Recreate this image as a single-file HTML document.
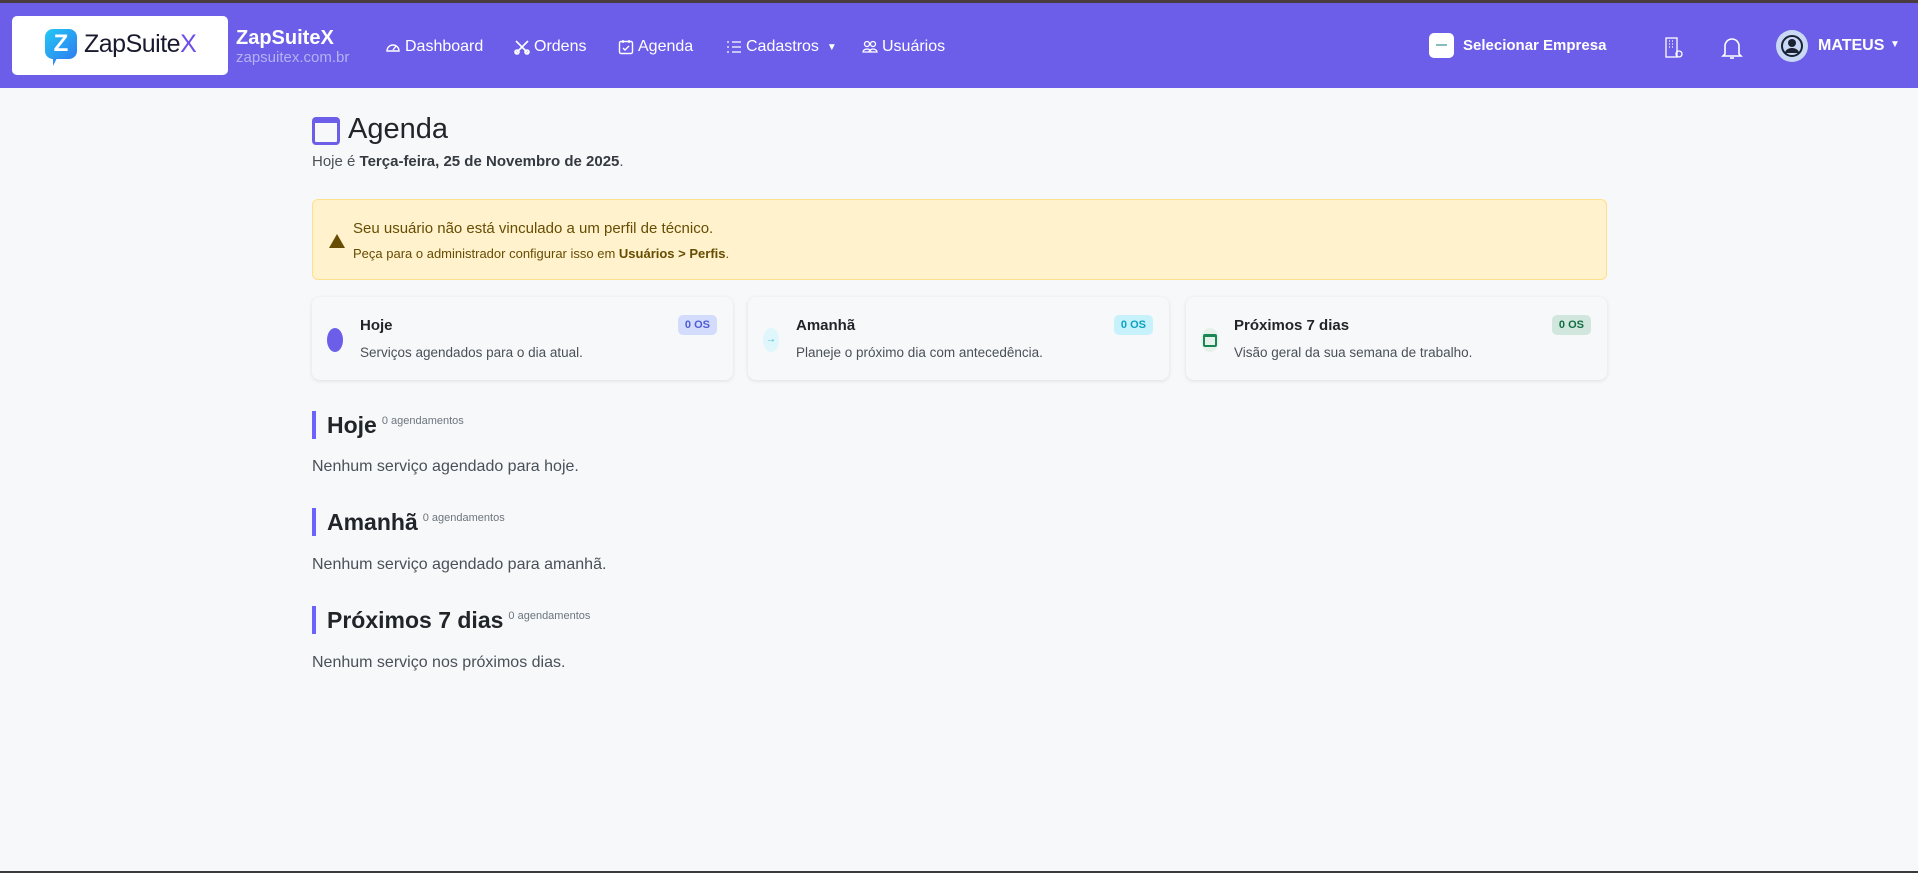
<!DOCTYPE html>
<html><head><meta charset="utf-8"><style>
*{box-sizing:border-box;margin:0;padding:0}
body{width:1918px;height:873px;background:#f7f8fa;font-family:"Liberation Sans",sans-serif;color:#212529;position:relative;overflow:hidden}
.top{position:absolute;left:0;top:0;width:1918px;height:3px;background:#4a3b3f}
.bot{position:absolute;left:0;bottom:0;width:1918px;height:2px;background:#3a3a3a}
header{position:absolute;top:3px;left:0;width:1918px;height:85px;background:#6c5ee9}
.logo{position:absolute;left:12px;top:13px;width:216px;height:59px;background:#fff;border-radius:5px}
.logo .z{position:absolute;left:33px;top:13px;width:32px;height:30px;border-radius:8px;background:linear-gradient(135deg,#22c8f5,#2f7df0);color:#fff;font-weight:bold;font-size:24px;text-align:center;line-height:30px}
.logo .z:after{content:"";position:absolute;left:8px;bottom:-7px;border-left:4px solid #2f8ef0;border-right:4px solid transparent;border-top:0;border-bottom:8px solid transparent}
.logo .t{position:absolute;left:72px;top:14px;font-size:25px;color:#1a1a2e;letter-spacing:-0.5px}
.brand{position:absolute;left:236px;top:24px;color:#fff;font-weight:bold;font-size:20px}
.sub{position:absolute;left:236px;top:46px;color:#b7b0f2;font-size:15px}
.nav{position:absolute;top:35px;color:#fff;font-size:16px;display:flex;align-items:center;gap:4px}
.nav svg{width:16px;height:16px}
.rt{position:absolute;color:#fff;font-weight:bold;font-size:16px}
h1{position:absolute;top:113px;left:312px;font-size:29px;font-weight:normal;color:#212529;padding-left:36px}
.cal{position:absolute;left:312px;top:117px;width:28px;height:28px;border:3px solid #6c5ee9;border-top-width:6px;border-radius:4px}
.date{position:absolute;left:312px;top:153px;font-size:15px;color:#495057}
.alert{position:absolute;left:312px;top:199px;width:1295px;height:81px;background:#fff2cc;border:1px solid #ffe08a;border-radius:6px;color:#664d03}
.alert .a1{position:absolute;left:40px;top:20px;font-size:15px}
.alert .a2{position:absolute;left:40px;top:46px;font-size:13px}
.alert .w{position:absolute;left:16px;top:34px;width:0;height:0;border-left:8px solid transparent;border-right:8px solid transparent;border-bottom:14px solid #664d03}
.card{position:absolute;top:297px;width:421px;height:83px;background:#f7f8fa;border-radius:8px;box-shadow:0 1px 4px rgba(0,0,0,.1)}
.card .h{position:absolute;left:48px;top:20px;font-size:15px;font-weight:bold;color:#212529}
.card .d{position:absolute;left:48px;top:48px;font-size:13.5px;color:#495057}
.card .b{position:absolute;right:16px;top:18px;font-size:11px;font-weight:bold;padding:4px 7px;border-radius:5px}
.card .ic{position:absolute;left:15px;top:31px;width:16px;height:24px;border-radius:50%}
.sec{position:absolute;left:312px;border-left:4px solid #6c63ff;padding-left:11px;height:28px;font-size:23px;font-weight:bold;line-height:28px;color:#212529}
.sec small{font-size:11px;font-weight:normal;color:#6c757d;vertical-align:top;line-height:20px;margin-left:5px}
.none{position:absolute;left:312px;font-size:16px;color:#495057}
</style></head><body>
<div class="top"></div>
<header>
<div class="logo"><div class="z">Z</div><div class="t">ZapSuite<span style="color:#6c4ee9">X</span></div></div>
<div class="brand">ZapSuiteX</div>
<div class="sub">zapsuitex.com.br</div>
<div class="nav" style="left:385px"><svg viewBox="0 0 16 16" fill="none" stroke="#fff" stroke-width="1.4"><path d="M2 12a6 6 0 1 1 12 0z"/><path d="M8 11l3-4"/></svg>Dashboard</div>
<div class="nav" style="left:514px"><svg viewBox="0 0 16 16" fill="none" stroke="#fff" stroke-width="1.6"><path d="M2 2l12 12M14 2L2 14"/><circle cx="3" cy="13" r="2"/><circle cx="13" cy="13" r="2"/></svg>Ordens</div>
<div class="nav" style="left:618px"><svg viewBox="0 0 16 16" fill="none" stroke="#fff" stroke-width="1.4"><rect x="1.5" y="2.5" width="13" height="12" rx="1.5"/><path d="M5 1v3M11 1v3M5 9l2 2 4-4"/></svg>Agenda</div>
<div class="nav" style="left:726px"><svg viewBox="0 0 16 16" fill="none" stroke="#fff" stroke-width="1.3"><path d="M6 3h9M6 8h9M6 13h9M1 3h2M1 8h2M1 13h2"/></svg>Cadastros <span style="font-size:10px;margin-left:4px">▼</span></div>
<div class="nav" style="left:862px"><svg viewBox="0 0 16 16" fill="none" stroke="#fff" stroke-width="1.3"><circle cx="5" cy="5" r="2.5"/><circle cx="11" cy="5" r="2.5"/><path d="M1 13a4 3 0 0 1 8 0zM7 13a4 3 0 0 1 8 0z"/></svg>Usuários</div>
<div style="position:absolute;left:1429px;top:30px;width:25px;height:25px;background:#fff;border-radius:5px"><div style="position:absolute;left:7px;top:11px;width:11px;height:2px;background:#8bb"></div></div>
<div class="rt" style="left:1463px;top:34px;font-size:15px">Selecionar Empresa</div>
<svg style="position:absolute;left:1664px;top:34px" width="20" height="22" viewBox="0 0 20 22" fill="none" stroke="#fff" stroke-width="1.3"><rect x="2" y="1" width="11" height="19"/><path d="M5 4h1M8 4h1M5 7h1M8 7h1M5 10h1M8 10h1"/><circle cx="15" cy="17" r="3"/></svg>
<svg style="position:absolute;left:1721px;top:32px" width="22" height="26" viewBox="0 0 22 26" fill="none" stroke="#fff" stroke-width="1.6"><path d="M4 19V11a7 7 0 0 1 14 0v8l2 2H2z"/><path d="M9 23h4"/></svg>
<div style="position:absolute;left:1776px;top:27px;width:32px;height:32px;border-radius:50%;background:#c9d8f5"><svg width="32" height="32" viewBox="0 0 32 32"><circle cx="16" cy="16" r="10" fill="none" stroke="#1a2233" stroke-width="2"/><circle cx="16" cy="13" r="4" fill="#1a2233"/><path d="M9 23a7 5 0 0 1 14 0" fill="#1a2233"/></svg></div>
<div class="rt" style="left:1818px;top:34px">MATEUS</div>
<div class="rt" style="left:1890px;top:36px;font-size:10px">▼</div>
</header>
<div class="cal"></div>
<h1>Agenda</h1>
<div class="date">Hoje é <b style="color:#343a40">Terça-feira, 25 de Novembro de 2025</b>.</div>
<div class="alert"><div class="w"></div><div class="a1">Seu usuário não está vinculado a um perfil de técnico.</div><div class="a2">Peça para o administrador configurar isso em <b>Usuários &gt; Perfis</b>.</div></div>
<div class="card" style="left:312px"><div class="ic" style="background:#6c5ee9"></div><div class="h">Hoje</div><div class="d">Serviços agendados para o dia atual.</div><div class="b" style="background:#d4dcfd;color:#4f5bd5">0 OS</div></div>
<div class="card" style="left:748px"><div class="ic" style="background:#dff6fb;color:#20b8d8;font-size:10px;text-align:center;line-height:24px">→</div><div class="h">Amanhã</div><div class="d">Planeje o próximo dia com antecedência.</div><div class="b" style="background:#c8f2fb;color:#0aa2c0">0 OS</div></div>
<div class="card" style="left:1186px"><div class="ic" style="background:#e5f1ea;width:18px"><div style="margin:6px 2px;width:14px;height:13px;border:2px solid #198754;border-top-width:3px;border-radius:2px"></div></div><div class="h">Próximos 7 dias</div><div class="d">Visão geral da sua semana de trabalho.</div><div class="b" style="background:#d1e7dd;color:#146c43">0 OS</div></div>
<div class="sec" style="top:411px">Hoje<small>0 agendamentos</small></div>
<div class="none" style="top:458px">Nenhum serviço agendado para hoje.</div>
<div class="sec" style="top:508px">Amanhã<small>0 agendamentos</small></div>
<div class="none" style="top:556px">Nenhum serviço agendado para amanhã.</div>
<div class="sec" style="top:606px">Próximos 7 dias<small>0 agendamentos</small></div>
<div class="none" style="top:654px">Nenhum serviço nos próximos dias.</div>
<div class="bot"></div>
</body></html>
